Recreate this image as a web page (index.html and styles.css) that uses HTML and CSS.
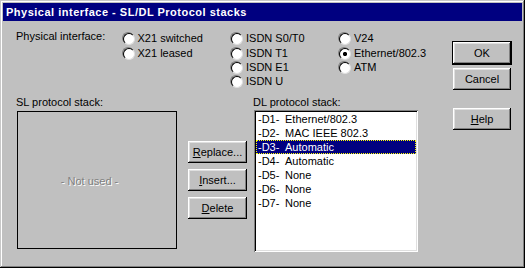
FILE: index.html
```html
<!DOCTYPE html>
<html>
<head>
<meta charset="utf-8">
<title>Physical interface - SL/DL Protocol stacks</title>
<link rel="stylesheet" href="styles.css">
</head>
<body>
<div class="window">
  <div class="titlebar">Physical interface - SL/DL Protocol stacks</div>
  <div class="client">
    <div class="main">
      <div class="top">
        <div class="label phys">Physical interface:</div>
        <div class="radio-col c1">
          <div class="radio"><span class="dot"></span><span>X21 switched</span></div>
          <div class="radio"><span class="dot"></span><span>X21 leased</span></div>
        </div>
        <div class="radio-col c2">
          <div class="radio"><span class="dot"></span><span>ISDN S0/T0</span></div>
          <div class="radio"><span class="dot"></span><span>ISDN T1</span></div>
          <div class="radio"><span class="dot"></span><span>ISDN E1</span></div>
          <div class="radio"><span class="dot"></span><span>ISDN U</span></div>
        </div>
        <div class="radio-col c3">
          <div class="radio"><span class="dot"></span><span>V24</span></div>
          <div class="radio"><span class="dot on"></span><span>Ethernet/802.3</span></div>
          <div class="radio"><span class="dot"></span><span>ATM</span></div>
        </div>
      </div>
      <div class="bottom">
        <div class="sl">
          <div class="label">SL protocol stack:</div>
          <div class="slbox"><span class="grayed">- Not used -</span></div>
        </div>
        <div class="midbtns">
          <div class="btn"><u>R</u>eplace...</div>
          <div class="btn"><u>I</u>nsert...</div>
          <div class="btn"><u>D</u>elete</div>
        </div>
        <div class="dl">
          <div class="label">DL protocol stack:</div>
          <div class="listbox">
            <div class="item"><span class="pfx">-D1-</span>Ethernet/802.3</div>
            <div class="item"><span class="pfx">-D2-</span>MAC IEEE 802.3</div>
            <div class="item sel"><span class="pfx">-D3-</span>Automatic</div>
            <div class="item"><span class="pfx">-D4-</span>Automatic</div>
            <div class="item"><span class="pfx">-D5-</span>None</div>
            <div class="item"><span class="pfx">-D6-</span>None</div>
            <div class="item"><span class="pfx">-D7-</span>None</div>
          </div>
        </div>
      </div>
    </div>
    <div class="side">
      <div class="btn default">OK</div>
      <div class="btn cancel">Cancel</div>
      <div class="btn help"><u>H</u>elp</div>
    </div>
  </div>
</div>
</body>
</html>
```
FILE: styles.css
```css
* { box-sizing: border-box; }
html, body { margin: 0; padding: 0; background: #c0c0c0; }
body {
  font-family: "Liberation Sans", Arial, sans-serif;
  font-size: 11px;
  color: #000;
}
.window {
  width: 525px;
  height: 268px;
  padding: 3px;
  background: #c0c0c0;
  box-shadow: inset -1px -1px #000, inset 1px 1px #c8c8c8, inset -2px -2px #808080, inset 2px 2px #fff;
}
.titlebar {
  height: 18px;
  line-height: 18px;
  background: #000080;
  color: #fff;
  font-weight: bold;
  font-size: 11px;
  letter-spacing: 0.5px;
  padding-left: 3px;
  white-space: nowrap;
}
.client {
  display: flex;
  align-items: flex-start;
}
.main {
  width: 450px;
  padding-left: 13px;
}
.label {
  line-height: 12px;
  white-space: nowrap;
}
.top {
  display: flex;
  align-items: flex-start;
  margin-top: 9px;
  height: 66px;
}
.phys { width: 105.5px; flex: none; }
.radio-col { padding-top: 2.33px; flex: none; }
.c1 { width: 108.5px; }
.c2 { width: 108px; }
.radio {
  display: flex;
  align-items: flex-start;
  gap: 4px;
  height: 14.33px;
  line-height: 12px;
  white-space: nowrap;
}
.dot {
  flex: none;
  width: 12px;
  height: 12px;
  border-radius: 50%;
  border: 1px solid;
  border-color: #808080 #fff #fff #808080;
}
.dot::before {
  content: "";
  display: block;
  width: 10px;
  height: 10px;
  border-radius: 50%;
  border: 1px solid;
  border-color: #000 #dfdfdf #dfdfdf #000;
  background: #fff;
}
.dot.on::before {
  background: radial-gradient(circle, #000 0, #000 1.8px, #fff 2.4px);
}
.bottom {
  display: flex;
  align-items: flex-start;
}
.sl { width: 161px; flex: none; }
.slbox {
  margin-top: 3px;
  margin-left: 1px;
  width: 160px;
  height: 138px;
  border: 1px solid #000;
  display: flex;
  align-items: center;
  justify-content: center;
  padding-right: 15px;
  padding-top: 1px;
}
.grayed {
  color: #808080;
  text-shadow: 1px 1px 0 #fff;
  white-space: nowrap;
}
.midbtns {
  margin-left: 11px;
  margin-top: 45px;
  display: flex;
  flex-direction: column;
  gap: 6px;
  flex: none;
}
.midbtns .btn { width: 59px; }
.dl {
  margin-left: 6px;
  flex: none;
}
.listbox {
  margin-top: 2px;
  margin-left: 1px;
  width: 164px;
  height: 142px;
  padding: 2px;
  background: #fff;
  box-shadow: inset 1px 1px #808080, inset -1px -1px #fff, inset 2px 2px #000, inset -2px -2px #dfdfdf;
}
.item {
  height: 14px;
  line-height: 14px;
  padding-left: 2px;
  white-space: nowrap;
}
.pfx {
  display: inline-block;
  width: 27px;
}
.item.sel {
  background: #000080;
  color: #fff;
  outline: 1px dotted #ffff00;
  outline-offset: -1px;
}
.btn {
  height: 22px;
  width: 58px;
  display: flex;
  align-items: center;
  justify-content: center;
  background: #c0c0c0;
  box-shadow: inset -1px -1px #000, inset 1px 1px #fff, inset -2px -2px #808080, inset 2px 2px #dfdfdf;
  white-space: nowrap;
  padding-bottom: 1px;
}
.btn u { text-decoration: underline; text-underline-offset: 1px; }
.side {
  margin-top: 21px;
  display: flex;
  flex-direction: column;
  flex: none;
}
.btn.default {
  outline: 1px solid #000;
}
.btn.cancel { margin-top: 4px; }
.btn.help { margin-top: 18px; }
```
